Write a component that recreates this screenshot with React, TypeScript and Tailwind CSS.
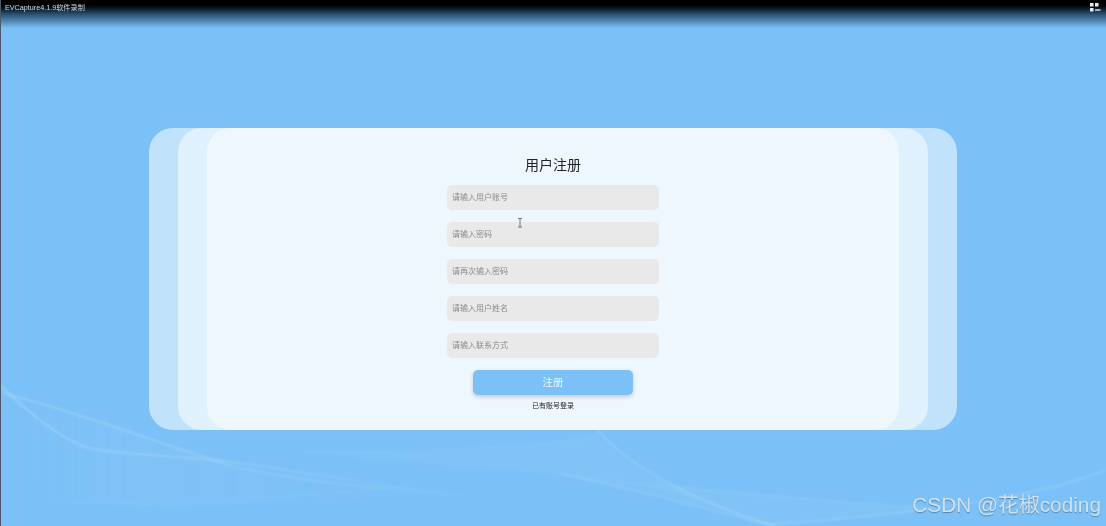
const fields = ["请输入用户账号", "请输入密码", "请再次输入密码", "请输入用户姓名", "请输入联系方式"];

const Waves = () => (
  <svg className="absolute inset-0 h-full w-full blur-[0.8px]" viewBox="0 0 1106 526" fill="none">
    <defs>
      <linearGradient id="fadeLeft" gradientUnits="userSpaceOnUse" x1="0" y1="0" x2="480" y2="0">
        <stop offset="0" stopColor="#fff" stopOpacity="0.26" />
        <stop offset="0.6" stopColor="#fff" stopOpacity="0.16" />
        <stop offset="1" stopColor="#fff" stopOpacity="0" />
      </linearGradient>
      <linearGradient id="bandLeft" gradientUnits="userSpaceOnUse" x1="0" y1="0" x2="480" y2="0">
        <stop offset="0" stopColor="#fff" stopOpacity="0" />
        <stop offset="0.3" stopColor="#fff" stopOpacity="0.035" />
        <stop offset="1" stopColor="#fff" stopOpacity="0" />
      </linearGradient>
    </defs>
    {/* soft bands */}
    <path d="M0 393C70 410 150 440 230 462C290 478 350 485 480 490C300 508 130 510 50 502C30 480 10 440 0 393Z" fill="url(#bandLeft)" />
    <path d="M300 452C440 452 540 448 600 432C630 470 700 505 770 526C680 490 620 480 560 475C480 470 380 460 300 452Z" fill="#fff" opacity="0.035" />
    <path d="M560 475C700 485 860 505 945 508C1010 500 1060 485 1106 470C1060 500 900 515 770 526C690 500 620 485 560 475Z" fill="#fff" opacity="0.045" />
    {/* bright strands */}
    <path d="M0 386C30 415 60 440 90 449C130 456 200 456 260 466C320 476 400 488 480 500" stroke="url(#fadeLeft)" strokeWidth="1.5" />
    <path d="M0 393C70 410 150 440 230 466C290 480 380 490 480 496" stroke="url(#fadeLeft)" strokeWidth="1.4" />
    <path d="M50 502C180 505 300 498 420 484" stroke="#fff" strokeOpacity="0.06" strokeWidth="1" />
    <path d="M160 449C300 454 440 452 580 441L600 432" stroke="#fff" strokeOpacity="0.07" />
    <path d="M597 430C630 468 700 505 775 526" stroke="#fff" strokeOpacity="0.22" strokeWidth="1.4" />
    <path d="M560 474C640 490 710 510 770 526" stroke="#fff" strokeOpacity="0.18" strokeWidth="1.4" />
    <path d="M680 489C760 495 840 503 930 508" stroke="#fff" strokeOpacity="0.1" />
    <path d="M770 525C900 515 1030 500 1106 470" stroke="#fff" strokeOpacity="0.16" strokeWidth="1.4" />
  </svg>
);

const App = () => {
  return (
    <div
      className="relative flex h-[526px] w-full flex-col overflow-hidden border-l border-[#4b5a6c] bg-[#7bc1f7]"
      style={{ fontFamily: '"Liberation Sans", "Noto Sans CJK SC", sans-serif' }}
    >
      <Waves />

      {/* recorder title bar */}
      <div className="relative flex h-[28px] shrink-0 justify-between bg-gradient-to-b from-[#000000] from-10% via-[#2a4f70] via-50% to-[#7bc1f7] pr-[5px] pl-[4px] pt-[3px] blur-[0.3px]">
        <span className="text-[7.2px] leading-[9px] text-[#d5d9dd]">EVCapture4.1.9软件录制</span>
        <svg width="11" height="10" viewBox="0 0 11 10" fill="#e8edf2">
          <rect x="0" y="0" width="3.500" height="3.500" />
          <rect x="5" y="0" width="3.500" height="3.500" />
          <rect x="0" y="5" width="3.500" height="3.500" />
          <rect x="5" y="6" width="5.500" height="2" opacity="0.7" />
        </svg>
      </div>

      {/* register card, three stacked layers */}
      <div className="relative mt-[100px] ml-[148px] flex h-[302px] w-[808px] rounded-[24px] bg-[#c1e2fb] px-[29px]">
        <div className="flex flex-1 rounded-[24px] bg-[#dff1fc] px-[29px]">
          <div className="flex flex-1 flex-col items-center rounded-[24px] bg-[#eff7fe] pt-[28px]">
            <h1 className="text-[14px] leading-[18px] font-normal text-[#222] blur-[0.3px]">用户注册</h1>
            <div className="mt-[11px] flex w-[212px] flex-col gap-[12px]">
              {fields.map((f) => (
                <div key={f} className="flex h-[25px] items-center rounded-[5px] bg-[#e9e9e9] px-[5px] text-[8px] text-[#8a8a8a]">
                  <span className="blur-[0.35px]">{f}</span>
                </div>
              ))}
            </div>
            <button className="mt-[12px] h-[25px] w-[160px] rounded-[5px] bg-[#7bc1f7] text-[10.500px] text-[#eef7fe] shadow-[0_2px_4px_rgba(0,0,0,0.18)]">
              <span className="blur-[0.3px]">注册</span>
            </button>
            <a className="mt-[6px] text-[7px] leading-[10px] text-[#222] blur-[0.3px]">已有账号登录</a>
          </div>
        </div>
      </div>

      {/* text cursor */}
      <svg className="absolute top-[218px] left-[516px] blur-[0.3px]" width="7" height="10" viewBox="0 0 7 10" fill="none" stroke="#666" strokeWidth="0.9">
        <path d="M1 .5h4M3 .5v8.500M1 9h4" />
      </svg>

      <span className="absolute right-[5px] bottom-[9px] text-[20.800px] leading-[24px] text-[#d0e2ef] blur-[0.3px] [text-shadow:0_1px_1px_rgba(70,90,110,0.6)]">
        CSDN @花椒coding
      </span>
    </div>
  );
};

export default App;
